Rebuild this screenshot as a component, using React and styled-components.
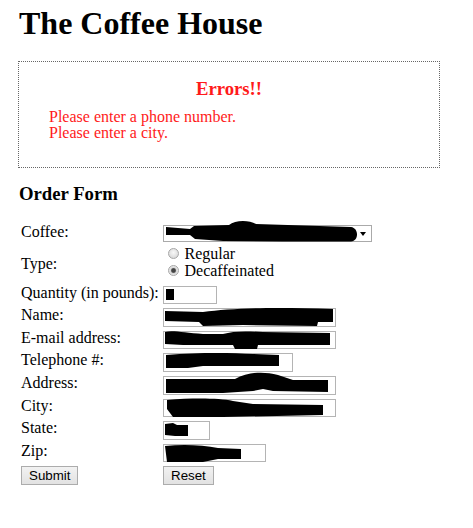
import styled, { createGlobalStyle } from "styled-components";

const GlobalStyle = createGlobalStyle`
    body {
        margin: 0;
        background: #fff;
        color: #000;
        font-family: "Liberation Serif", "Times New Roman", serif;
        font-size: 16px;
    }
`

// scribbles that hide the filled-in values
const fields = [
    { label: "Quantity (in pounds):", w: 54, d: "M3,3 L11,3 L11,14 L3,14 Z" },
    { label: "Name:", w: 173, d: "M2,3 L40,4 C70,0 110,-1 170,1 L170,14 L155,14 L154,18 L80,17 L40,18 L36,14 L2,13 Z" },
    { label: "E-mail address:", w: 173, d: "M2,1 C10,-1 22,2 40,3 L60,3 C70,0 82,0 100,1 L167,2 L167,14 L95,14 L94,18 L72,18 L70,14 L20,14 L2,13 Z" },
    { label: "Telephone #:", w: 130, d: "M3,2 C40,-1 70,0 90,1 L116,2 L116,13 L40,13 L25,15 L3,15 Z" },
    { label: "Address:", w: 173, d: "M3,3 L72,3 C85,-4 100,-5 115,-1 L130,4 L165,4 L165,16 L110,15 L100,13 L90,15 L60,17 L3,17 Z" },
    { label: "City:", w: 173, d: "M4,1 C30,-1 55,-1 70,2 L90,5 L160,6 L160,16 L60,18 L10,18 L4,10 Z" },
    { label: "State:", w: 47, d: "M2,3 L10,2 L14,4 L25,4 L25,15 L12,15 L2,14 Z" },
    { label: "Zip:", w: 103, d: "M2,2 C20,0 40,1 55,4 L78,5 L78,15 L55,15 L40,18 L4,18 Z" },
];

export default function App() {
    return (
        <Page>
            <GlobalStyle />
            <Title>The Coffee House</Title>
            <ErrorBox>
                <ErrorTitle>Errors!!</ErrorTitle>
                <ErrorList>
                    <li>Please enter a phone number.</li>
                    <li>Please enter a city.</li>
                </ErrorList>
            </ErrorBox>
            <SubTitle>Order Form</SubTitle>
            <Form onSubmit={(e) => e.preventDefault()}>
                <Label>Coffee:</Label>
                <Field w={209} h={17}>
                    <Select />
                    <Redact viewBox="0 0 209 17" width="209" height="17">
                        <path d="M3,2 L27,4 L31,1 L66,0 C72,-5 86,-5 93,-1 L188,2 C196,3 196,16 188,16.5 L120,16.5 L60,16 L32,14 L27,10 L3,10 Z" />
                        <path d="M197,7 L203,7 L200,11 Z" />
                    </Redact>
                </Field>

                <Label center>Type:</Label>
                <Radios>
                    <Option><Radio /> Regular</Option>
                    <Option><Radio checked /> Decaffeinated</Option>
                </Radios>

                {fields.map((f) => (
                    <Row key={f.label}>
                        <Label>{f.label}</Label>
                        <Field w={f.w}>
                            <Input readOnly />
                            <Redact viewBox={`0 0 ${f.w} 19`} width={f.w} height="19">
                                <path d={f.d} />
                            </Redact>
                        </Field>
                    </Row>
                ))}

                <Button type="submit">Submit</Button>
                <Button type="reset">Reset</Button>
            </Form>
        </Page>
    );
}

const Page = styled.div`
    padding: 5px 0 40px 18px;
`

const Title = styled.h1`
    margin: 0 0 19px 1px;
    font-size: 32px;
    line-height: 37px;
    font-weight: bold;
`

const ErrorBox = styled.div`
    box-sizing: border-box;
    width: 422px;
    border: 1px dotted #666;
    padding: 15.6px 0 25.6px 30px;
    color: #ff1a1a;
`

const ErrorTitle = styled.h3`
    margin: 0 0 10.3px -30px;
    text-align: center;
    font-size: 18.72px;
    line-height: 21.5px;
`

const ErrorList = styled.ul`
    margin: 0;
    padding: 0;
    list-style: none;
    line-height: 16px;
`

const SubTitle = styled.h3`
    margin: 14.6px 0 20.9px 1px;
    font-size: 18.72px;
    line-height: 21.5px;
`

const Form = styled.form`
    display: grid;
    grid-template-columns: 142px auto;
    row-gap: 4px;
    align-items: start;
    margin-left: 3px;
`

const Row = styled.div`
    display: contents;
`

const Label = styled.label`
    line-height: 14px;
    align-self: ${(p) => (p.center ? "center" : "start")};
`

const Field = styled.span`
    position: relative;
    display: block;
    width: ${(p) => p.w}px;
    height: ${(p) => p.h || 18.6}px;
`

const Input = styled.input`
    box-sizing: border-box;
    display: block;
    width: 100%;
    height: 100%;
    margin: 0;
    padding: 0;
    border: 1px solid #b4b4b4;
    background: #fff;
    outline: none;
`

const Select = styled.select`
    box-sizing: border-box;
    display: block;
    width: 100%;
    height: 100%;
    margin: 0;
    border: 1px solid #aaa;
    background: #fff;
    appearance: none;
`

const Redact = styled.svg`
    position: absolute;
    left: 0;
    top: 0;
    overflow: visible;
    pointer-events: none;
    fill: #000;
`

const Radios = styled.div`
    margin: -1px 0 2px;
    line-height: 17.3px;
`

const Option = styled.label`
    display: flex;
    align-items: center;
    gap: 6px;
    padding-left: 4.5px;
`

const Radio = styled.span`
    box-sizing: border-box;
    width: 11px;
    height: 11px;
    border-radius: 50%;
    border: 1px solid #a6a6a6;
    background: ${(p) =>
        p.checked
            ? "radial-gradient(circle, #444 0 1.8px, #8a8a8a 2.4px, #d8d8d8 3px, #eee 5px)"
            : "radial-gradient(circle at 50% 40%, #f8f8f8 0, #dcdcdc 5px)"};
`

const Button = styled.button`
    justify-self: start;
    box-sizing: border-box;
    height: 19px;
    margin: 0;
    padding: 0 7px;
    border: 1px solid #acacac;
    border-radius: 0;
    background: linear-gradient(#f2f2f2, #e2e2e2);
    font-family: "Liberation Sans", Arial, sans-serif;
    font-size: 13.33px;
    line-height: 16px;
    color: #000;
`
